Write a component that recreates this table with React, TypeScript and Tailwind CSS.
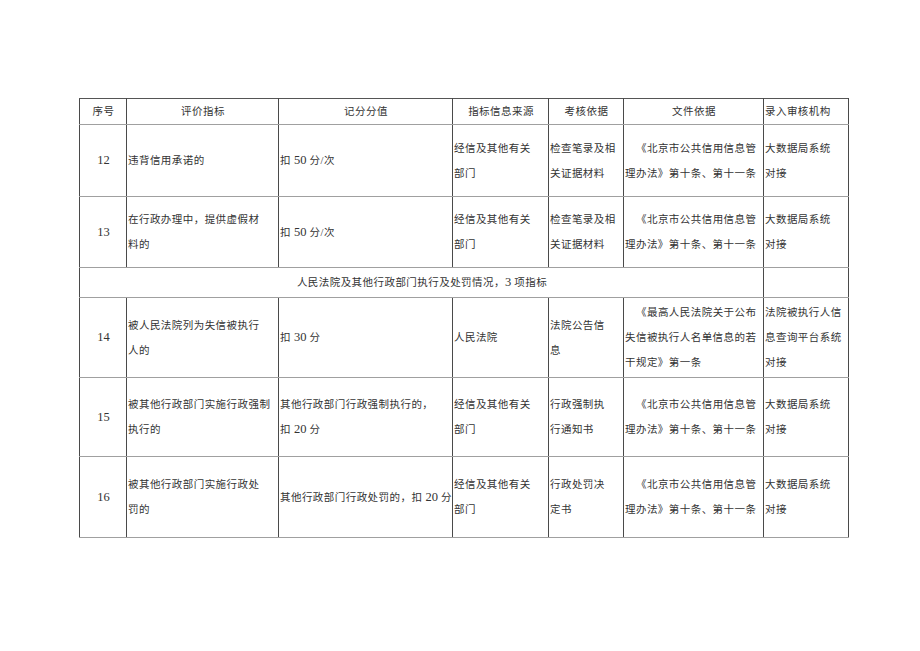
import React from "react";

type Row = {
  no: string;
  item: string[];
  score: string[];
  source: string[];
  check: string[];
  doc: string[];
  org: string[];
  h: string;
};

const rowsA: Row[] = [
  {
    no: "12",
    item: ["违背信用承诺的"],
    score: ["扣 50 分/次"],
    source: ["经信及其他有关", "部门"],
    check: ["检查笔录及相", "关证据材料"],
    doc: ["《北京市公共信用信息管", "理办法》第十条、第十一条"],
    org: ["大数据局系统", "对接"],
    h: "h-[72px]",
  },
  {
    no: "13",
    item: ["在行政办理中，提供虚假材", "料的"],
    score: ["扣 50 分/次"],
    source: ["经信及其他有关", "部门"],
    check: ["检查笔录及相", "关证据材料"],
    doc: ["《北京市公共信用信息管", "理办法》第十条、第十一条"],
    org: ["大数据局系统", "对接"],
    h: "h-[71px]",
  },
];

const rowsB: Row[] = [
  {
    no: "14",
    item: ["被人民法院列为失信被执行", "人的"],
    score: ["扣 30 分"],
    source: ["人民法院"],
    check: ["法院公告信", "息"],
    doc: ["《最高人民法院关于公布", "失信被执行人名单信息的若", "干规定》第一条"],
    org: ["法院被执行人信", "息查询平台系统", "对接"],
    h: "h-[80px]",
  },
  {
    no: "15",
    item: ["被其他行政部门实施行政强制", "执行的"],
    score: ["其他行政部门行政强制执行的，", "扣 20 分"],
    source: ["经信及其他有关", "部门"],
    check: ["行政强制执", "行通知书"],
    doc: ["《北京市公共信用信息管", "理办法》第十条、第十一条"],
    org: ["大数据局系统", "对接"],
    h: "h-[79px]",
  },
  {
    no: "16",
    item: ["被其他行政部门实施行政处", "罚的"],
    score: ["其他行政部门行政处罚的，扣 20 分"],
    source: ["经信及其他有关", "部门"],
    check: ["行政处罚决", "定书"],
    doc: ["《北京市公共信用信息管", "理办法》第十条、第十一条"],
    org: ["大数据局系统", "对接"],
    h: "h-[81px]",
  },
];

const cell =
  "border-x border-x-[#4a4a4a] border-y border-y-[#a0a0a0] p-0 pl-[1px] align-middle leading-[25px] whitespace-nowrap";

// digits are set a bit larger, as in the source document
function Text({ s }: { s: string }) {
  return (
    <>
      {s.split(/(\d+)/).map((part, i) =>
        /^\d+$/.test(part) ? (
          <span key={i} className="text-[12.5px] tracking-normal">
            {part}
          </span>
        ) : (
          <React.Fragment key={i}>{part}</React.Fragment>
        )
      )}
    </>
  );
}

function Lines({ lines }: { lines: string[] }) {
  return (
    <>
      {lines.map((l, i) => (
        <React.Fragment key={i}>
          {i > 0 && <br />}
          <Text s={l} />
        </React.Fragment>
      ))}
    </>
  );
}

function DataRow({ r }: { r: Row }) {
  return (
    <tr>
      <td className={`${cell} ${r.h} text-center text-[12.5px] tracking-normal`}>{r.no}</td>
      <td className={cell}>
        <Lines lines={r.item} />
      </td>
      <td className={cell}>
        <Lines lines={r.score} />
      </td>
      <td className={cell}>
        <Lines lines={r.source} />
      </td>
      <td className={cell}>
        <Lines lines={r.check} />
      </td>
      <td className={`${cell} indent-[11px]`}>
        <Lines lines={r.doc} />
      </td>
      <td className={cell}>
        <Lines lines={r.org} />
      </td>
    </tr>
  );
}

export default function App() {
  return (
    <div className="min-h-screen w-full bg-white pt-[98px] pl-[79px] text-[#333] font-['Liberation_Serif','Noto_Sans_CJK_SC',serif] text-[10.5px] tracking-[0.45px]">
      <table className="table-fixed border-collapse w-[769px]">
        <colgroup>
          <col className="w-[47px]" />
          <col className="w-[152px]" />
          <col className="w-[174px]" />
          <col className="w-[96px]" />
          <col className="w-[75px]" />
          <col className="w-[140px]" />
          <col className="w-[85px]" />
        </colgroup>
        <tbody>
          <tr>
            <td className={`${cell} h-[25px] border-t-[#555] text-center`}>序号</td>
            <td className={`${cell} border-t-[#555] text-center`}>评价指标</td>
            <td className={`${cell} border-t-[#555] text-center`}>记分分值</td>
            <td className={`${cell} border-t-[#555] text-center`}>指标信息来源</td>
            <td className={`${cell} border-t-[#555] text-center`}>考核依据</td>
            <td className={`${cell} border-t-[#555] text-center`}>文件依据</td>
            <td className={`${cell} border-t-[#555]`}>录入审核机构</td>
          </tr>
          {rowsA.map((r) => (
            <DataRow key={r.no} r={r} />
          ))}
          <tr>
            <td colSpan={6} className={`${cell} h-[30px] text-center`}>
              <Text s="人民法院及其他行政部门执行及处罚情况，3 项指标" />
            </td>
            <td className={cell}></td>
          </tr>
          {rowsB.map((r) => (
            <DataRow key={r.no} r={r} />
          ))}
        </tbody>
      </table>
    </div>
  );
}
